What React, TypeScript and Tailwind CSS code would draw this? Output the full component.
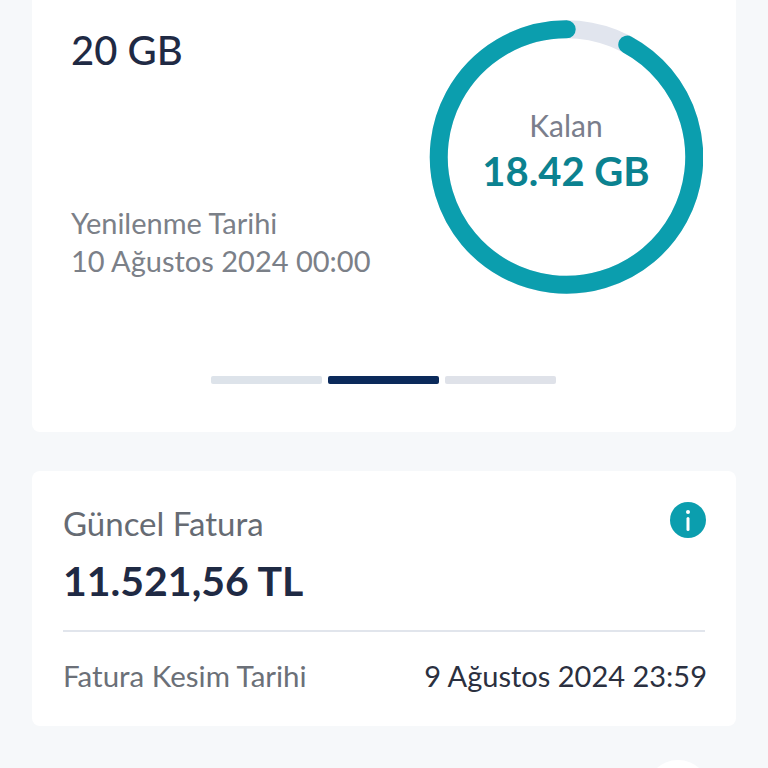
export default function App() {
  const r = 127.75;
  const c = 2 * Math.PI * r;
  const gap = c * 0.079;
  return (
    <div className="relative flex h-[768px] w-[768px] flex-col overflow-hidden bg-[#f6f8fa] px-8 font-['Lato','Noto_Sans',sans-serif]">
      <section className="flex h-[432px] w-[704px] shrink-0 flex-col rounded-b-lg bg-white">
        <div className="flex h-[345px] justify-between">
          <div className="flex flex-col pl-[39px]">
            <p className="mt-[27px] text-[40px] font-medium leading-[46px] text-[#1f2a44]">20 GB</p>
            <p className="mt-[131px] text-[29px] leading-[38px] text-[#7b8088]">Yenilenme Tarihi</p>
            <p className="text-[29px] leading-[38px] text-[#7b8088]">10 Ağustos 2024 00:00</p>
          </div>
          <div className="relative mr-[33px] mt-[20px] h-[274px] w-[274px]">
            <svg viewBox="0 0 274 274" className="h-[274px] w-[274px]">
              <circle cx="137.5" cy="137" r={r} fill="none" stroke="#e1e5ee" strokeWidth="18" />
              <circle
                cx="137.5"
                cy="137"
                r={r}
                fill="none"
                stroke="#0b9eae"
                strokeWidth="18"
                strokeLinecap="round"
                strokeDasharray={`${c - gap} ${c}`}
                transform="rotate(-61.6 137.5 137)"
              />
            </svg>
            <div className="absolute inset-0 flex flex-col items-center pt-[86px]">
              <p className="text-[30px] leading-[38px] text-[#7a7e8c]">Kalan</p>
              <p className="mt-[2px] text-[40px] font-bold leading-[50px] text-[#0b8290]">18.42 GB</p>
            </div>
          </div>
        </div>
        <div className="mt-[31px] flex justify-center gap-[6px] pr-[1px]">
          <span className="h-2 w-[111px] rounded-[2px] bg-[#dde3ea]" />
          <span className="h-2 w-[111px] rounded-[2px] bg-[#0b2a5b]" />
          <span className="h-2 w-[111px] rounded-[2px] bg-[#dfe2e9]" />
        </div>
      </section>
      <section className="mt-[39px] flex h-[255px] w-[704px] shrink-0 flex-col rounded-lg bg-white px-[31px]">
        <div className="flex justify-between pt-[31px]">
          <div className="pt-[2px]">
            <p className="text-[33px] leading-[38px] text-[#666b73]">Güncel Fatura</p>
            <p className="mt-[14px] text-[41px] font-bold leading-[50px] text-[#1f2a44]">11.521,56 TL</p>
          </div>
          <svg viewBox="0 0 36 36" className="-mr-px h-9 w-9">
            <circle cx="18" cy="18" r="18" fill="#0b9eae" />
            <circle cx="18" cy="10" r="2" fill="#fff" />
            <rect x="16.5" y="15" width="3" height="14" rx="1.5" fill="#fff" />
          </svg>
        </div>
        <div className="mt-[24px] h-[2px] bg-[#e1e5ec]" />
        <div className="mt-[25px] flex items-center justify-between">
          <p className="text-[29.5px] leading-[38px] text-[#6b7078]">Fatura Kesim Tarihi</p>
          <p className="-mr-[2px] text-[29px] leading-[38px] text-[#2b3040]">9 Ağustos 2024 23:59</p>
        </div>
      </section>
      <div className="absolute left-[646px] top-[760px] h-16 w-16 rounded-full bg-white" />
    </div>
  );
}
